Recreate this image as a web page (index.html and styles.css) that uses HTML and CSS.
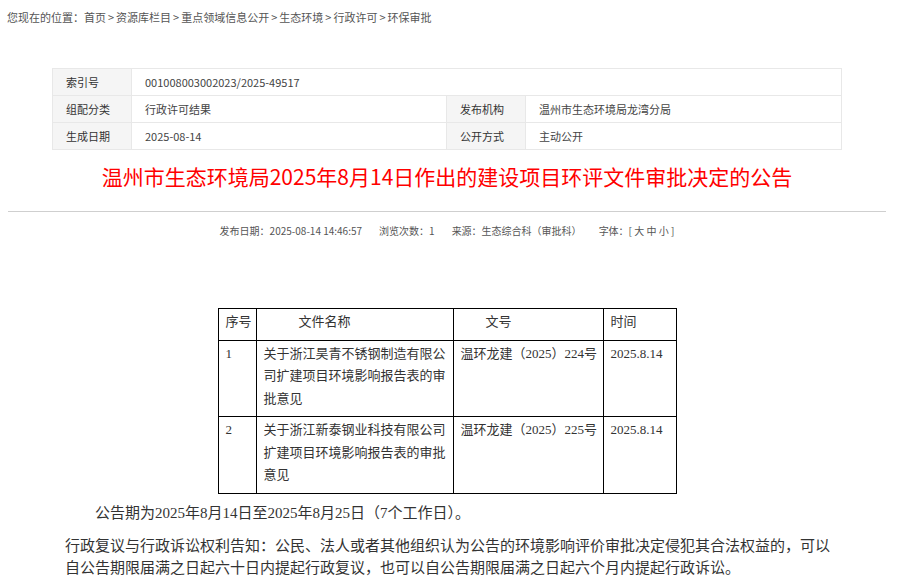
FILE: index.html
```html
<!DOCTYPE html>
<html lang="zh-CN">
<head>
<meta charset="utf-8">
<title>环保审批</title>
<link rel="stylesheet" href="styles.css">
</head>
<body>
<div class="page">
  <div class="crumb">您现在的位置：<a>首页</a><span class="sep">&gt;</span><a>资源库栏目</a><span class="sep">&gt;</span><a>重点领域信息公开</a><span class="sep">&gt;</span><a>生态环境</a><span class="sep">&gt;</span><a>行政许可</a><span class="sep">&gt;</span><a>环保审批</a></div>

  <table class="info">
    <colgroup><col class="c-l"><col class="c-v"><col class="c-l"><col class="c-v2"></colgroup>
    <tr><th>索引号</th><td colspan="3">001008003002023/2025-49517</td></tr>
    <tr><th>组配分类</th><td>行政许可结果</td><th>发布机构</th><td>温州市生态环境局龙湾分局</td></tr>
    <tr><th>生成日期</th><td>2025-08-14</td><th>公开方式</th><td>主动公开</td></tr>
  </table>

  <h1 class="title">温州市生态环境局2025年8月14日作出的建设项目环评文件审批决定的公告</h1>
  <div class="rule"></div>
  <div class="meta">
    <span>发布日期：2025-08-14 14:46:57</span>
    <span>浏览次数：1</span>
    <span>来源：生态综合科（审批科）</span>
    <span>字体：[ <a>大</a> <a>中</a> <a>小</a> ]</span>
  </div>

  <table class="docs">
    <colgroup><col class="d1"><col class="d2"><col class="d3"><col class="d4"></colgroup>
    <tr><th>序号</th><th class="h-name">文件名称</th><th class="h-no">文号</th><th>时间</th></tr>
    <tr><td>1</td><td>关于浙江昊青不锈钢制造有限公司扩建项目环境影响报告表的审批意见</td><td>温环龙建（2025）224号</td><td>2025.8.14</td></tr>
    <tr><td>2</td><td>关于浙江新泰钢业科技有限公司扩建项目环境影响报告表的审批意见</td><td>温环龙建（2025）225号</td><td>2025.8.14</td></tr>
  </table>

  <div class="body">
    <p class="p-period">公告期为2025年8月14日至2025年8月25日（7个工作日）。</p>
    <p class="p-notice">行政复议与行政诉讼权利告知：公民、法人或者其他组织认为公告的环境影响评价审批决定侵犯其合法权益的，可以自公告期限届满之日起六十日内提起行政复议，也可以自公告期限届满之日起六个月内提起行政诉讼。</p>
  </div>
</div>
</body>
</html>
```

FILE: styles.css
```css
html, body {
  margin: 0;
  padding: 0;
  background: #fff;
}
body {
  font-family: "Noto Sans CJK SC", "Noto Sans", sans-serif;
  color: #333;
}
.page {
  width: 878px;
  margin-left: 8px;
}
.crumb {
  padding-top: 9px;
  margin-left: -1px;
  font-size: 11px;
  line-height: 16px;
  color: #555;
}
.crumb .sep {
  margin: 0 2px;
}
.info {
  margin: 43px auto 0;
  width: 789px;
  border-collapse: collapse;
  table-layout: fixed;
  font-size: 11px;
}
.info .c-l { width: 79px; }
.info .c-v { width: 315px; }
.info .c-v2 { width: 316px; }
.info th, .info td {
  border: 1px solid #e8e8e8;
  height: 26px;
  padding: 0 0 0 13px;
  text-align: left;
  font-weight: normal;
  line-height: 16px;
}
.info th {
  background: #f5f5f5;
  color: #333;
}
.info td {
  color: #444;
}
.title {
  margin: 11px 0 0;
  text-align: center;
  color: #ff0000;
  font-size: 21px;
  line-height: 30px;
  font-weight: normal;
}
.rule {
  margin-top: 20px;
  border-top: 1px solid #cfcfcf;
}
.meta {
  margin-top: 11px;
  display: flex;
  justify-content: center;
  gap: 17px;
  font-size: 10px;
  line-height: 16px;
  color: #555;
}
.docs {
  margin: 69px auto 0;
  width: 458px;
  border-collapse: collapse;
  table-layout: fixed;
  font-family: "Liberation Serif", "Noto Sans CJK SC", serif;
  font-size: 13px;
  color: #333;
}
.docs .d1 { width: 38px; }
.docs .d2 { width: 197px; }
.docs .d3 { width: 150px; }
.docs .d4 { width: 73px; }
.docs th, .docs td {
  border: 1px solid #000;
  padding: 2px 2px 6px 7px;
  vertical-align: top;
  text-align: left;
  font-weight: normal;
  line-height: 22.5px;
}
.docs th.h-name { padding-left: 42px; }
.docs th.h-no { padding-left: 32px; }
.body {
  margin-left: 57px;
  width: 775px;
  font-family: "Liberation Serif", "Noto Sans CJK SC", serif;
  font-size: 15px;
  line-height: 22px;
  color: #333;
}
.body p {
  margin: 0;
}
.p-period {
  margin-top: 8px !important;
  text-indent: 2em;
}
.p-notice {
  margin-top: 11px !important;
}
```
